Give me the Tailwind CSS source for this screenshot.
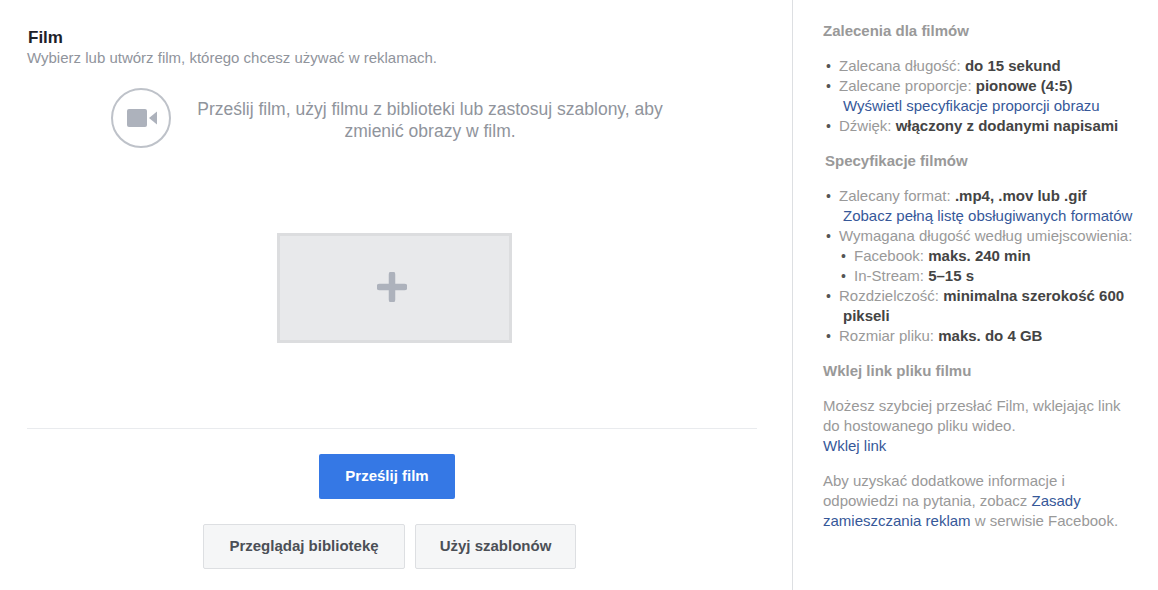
<!DOCTYPE html>
<html lang="pl">
<head>
    <meta charset="UTF-8">
    <title>Film</title>
    <script src="https://cdn.jsdelivr.net/npm/@tailwindcss/browser@4"></script>
</head>
<body class="bg-white font-['Liberation_Sans',Arial,sans-serif] overflow-hidden">
    <div class="flex h-[590px] w-[1158px]">
        <!-- main column -->
        <div class="w-[792px] shrink-0 pl-[27px] pr-[35px] flex flex-col">
            <h1 class="mt-[28px] ml-[1px] text-[17px] leading-5 font-bold text-[#1d2129]">Film</h1>
            <p class="text-[15px] leading-[20px] text-[#90949c]">Wybierz lub utwórz film, którego chcesz używać w reklamach.</p>

            <div class="flex items-start mt-[11px] pl-[84px]">
                <div class="w-[60px] h-[60px] rounded-full border-[2px] border-[#bec2c9] flex items-center justify-center shrink-0 mt-[9px]">
                    <svg width="32" height="20" viewBox="0 0 32 20" class="ml-[2px]">
                        <rect x="1" y="1" width="20" height="18" rx="2" fill="#adb2bc"/>
                        <path d="M23 10 L31 3.5 V16.5 Z" fill="#adb2bc"/>
                    </svg>
                </div>
                <p class="w-[492px] ml-[13px] mt-[19px] text-center text-[17.5px] leading-[22px] text-[#90949c]">Prześlij film, użyj filmu z biblioteki lub zastosuj szablony, aby zmienić obrazy w film.</p>
            </div>

            <div class="mt-[85px] ml-[250px] w-[235px] h-[110px] bg-[#e8e9eb] border-[3px] border-[#dcdddf] flex items-center justify-center">
                <svg width="30" height="30" viewBox="0 0 30 30" class="mr-[5px] mb-[2px]">
                    <path d="M15 2.5 V27.5 M2.5 15 H27.5" stroke="#adb2bc" stroke-width="6.5" stroke-linecap="round" fill="none"/>
                </svg>
            </div>

            <div class="mt-[85px] border-t border-[#e9ebee]"></div>

            <div class="flex justify-center mt-[25px] pr-[10px]">
                <button class="w-[136px] h-[45px] rounded-[2px] bg-[#3578e5] text-white text-[15px] font-bold">Prześlij film</button>
            </div>
            <div class="flex justify-center gap-[10px] mt-[25px] ml-[-5px]">
                <button class="w-[202px] h-[45px] rounded-[2px] bg-[#f5f6f7] border border-[#dddfe2] text-[#4b4f56] text-[15px] font-bold">Przeglądaj bibliotekę</button>
                <button class="w-[161px] h-[45px] rounded-[2px] bg-[#f5f6f7] border border-[#dddfe2] text-[#4b4f56] text-[15px] font-bold">Użyj szablonów</button>
            </div>
        </div>

        <!-- guidance sidebar -->
        <aside class="w-[366px] border-l border-[#dddfe2] pl-[30px] pr-[20px] pt-[21px] text-[15px] leading-5 text-[#999999]">
            <h2 class="font-bold">Zalecenia dla filmów</h2>
            <ul class="mt-[15px] ml-[3px]">
                <li class="flex"><span class="w-[13px] text-[#555555] text-sm">•</span><span>Zalecana długość: <b class="text-[#444444]">do 15 sekund</b></span></li>
                <li class="flex"><span class="w-[13px] text-[#555555] text-sm">•</span><span>Zalecane proporcje: <b class="text-[#444444]">pionowe (4:5)</b></span></li>
                <li class="pl-[17px]"><a class="text-[#365899]">Wyświetl specyfikacje proporcji obrazu</a></li>
                <li class="flex"><span class="w-[13px] text-[#555555] text-sm">•</span><span>Dźwięk: <b class="text-[#444444]">włączony z dodanymi napisami</b></span></li>
            </ul>

            <h2 class="font-bold mt-[15px] ml-[2px]">Specyfikacje filmów</h2>
            <ul class="mt-[15px] ml-[3px]">
                <li class="flex"><span class="w-[13px] text-[#555555] text-sm">•</span><span>Zalecany format: <b class="text-[#444444]">.mp4, .mov lub .gif</b></span></li>
                <li class="pl-[17px]"><a class="text-[#365899]">Zobacz pełną listę obsługiwanych formatów</a></li>
                <li class="flex"><span class="w-[13px] text-[#555555] text-sm">•</span><span>Wymagana długość według umiejscowienia:</span></li>
                <li class="flex pl-[15px]"><span class="w-[13px] text-[#555555] text-sm">•</span><span>Facebook: <b class="text-[#444444]">maks. 240 min</b></span></li>
                <li class="flex pl-[15px]"><span class="w-[13px] text-[#555555] text-sm">•</span><span>In-Stream: <b class="text-[#444444]">5–15 s</b></span></li>
                <li class="flex"><span class="w-[13px] text-[#555555] text-sm">•</span><span>Rozdzielczość: <b class="text-[#444444]">minimalna szerokość 600</b></span></li>
                <li class="pl-[17px]"><b class="text-[#444444]">pikseli</b></li>
                <li class="flex"><span class="w-[13px] text-[#555555] text-sm">•</span><span>Rozmiar pliku: <b class="text-[#444444]">maks. do 4 GB</b></span></li>
            </ul>

            <h2 class="font-bold mt-[15px]">Wklej link pliku filmu</h2>
            <p class="mt-[15px]">Możesz szybciej przesłać Film, wklejając link<br>do hostowanego pliku wideo.<br><a class="text-[#365899]">Wklej link</a></p>
            <p class="mt-[15px]">Aby uzyskać dodatkowe informacje i<br>odpowiedzi na pytania, zobacz <a class="text-[#365899]">Zasady<br>zamieszczania reklam</a> w serwisie Facebook.</p>
        </aside>
    </div>
</body>
</html>
